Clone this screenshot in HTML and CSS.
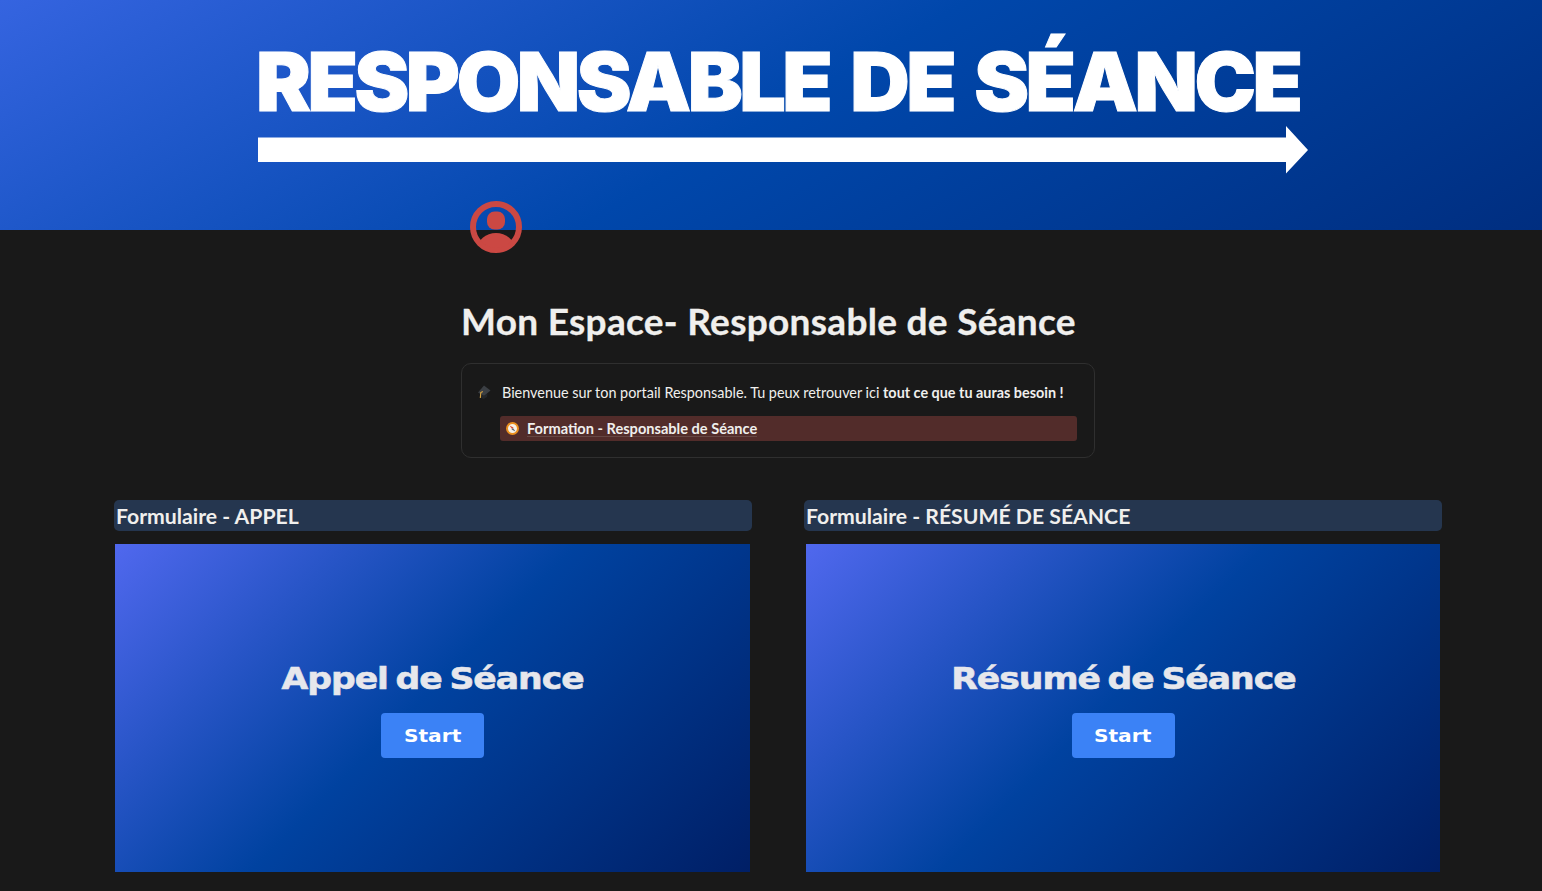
FILE: index.html
```html
<!DOCTYPE html>
<html lang="fr">
<head>
    <meta charset="UTF-8">
    <title>Mon Espace- Responsable de Séance</title>
    <link rel="stylesheet" href="styles.css">
</head>
<body>
    <header class="banner">
        <div class="banner-title">RESPONSABLE DE SÉANCE</div>
        <svg class="banner-arrow" width="1050" height="48" viewBox="0 0 1050 48">
            <path fill="#fff" d="M0 11.500H1028V0L1050 24 1028 47.500V36H0Z"/>
        </svg>
    </header>

    <svg class="avatar" width="52" height="52" viewBox="0 0 52 52">
        <defs>
            <clipPath id="avatar-clip"><circle cx="26" cy="26" r="21"/></clipPath>
        </defs>
        <circle cx="26" cy="26" r="23" fill="none" stroke="#cb4843" stroke-width="6"/>
        <rect x="17" y="10.500" width="18" height="18" rx="7.500" fill="#cb4843"/>
        <ellipse cx="26" cy="48" rx="18.700" ry="16" fill="#cb4843" clip-path="url(#avatar-clip)"/>
    </svg>

    <main class="page">
        <section class="intro">
            <h1 class="page-title">Mon Espace- Responsable de Séance</h1>
            <div class="callout">
                <div class="callout-row">
                    <svg class="cap-icon" width="14" height="15" viewBox="0 0 14 15">
                        <path fill="#3b3f44" d="M7 0.500 13.500 5.500 7 11 1 7.500Z"/>
                        <path fill="#23262a" d="M4 9 7 11 10.500 8.500 10 12 6.500 14 4 12.500Z"/>
                        <path fill="none" stroke="#d9a441" stroke-width="1.100" d="M5.800 6.500 3.800 7.500 3.300 13"/>
                    </svg>
                    <p class="callout-text">Bienvenue sur ton portail Responsable. Tu peux retrouver ici <strong>tout ce que tu auras besoin !</strong></p>
                </div>
                <div class="page-link">
                    <svg class="compass-icon" width="13" height="13" viewBox="0 0 13 13">
                        <circle cx="6.500" cy="6.500" r="5.500" fill="#f5f1e8" stroke="#ea8f1e" stroke-width="2"/>
                        <path fill="#d8482f" d="M3.500 3.500 7.500 5.500 6 7Z"/>
                        <path fill="#5a6470" d="M9.500 9.500 5.500 7.500 7 6Z"/>
                    </svg>
                    <span class="page-link-label">Formation - Responsable de Séance</span>
                </div>
            </div>
        </section>

        <section class="forms">
            <article class="form-block">
                <h2 class="form-heading">Formulaire - APPEL</h2>
                <div class="form-card">
                    <div class="form-card-title">Appel de Séance</div>
                    <a class="start-btn"><span class="start-label">Start</span></a>
                </div>
            </article>
            <article class="form-block">
                <h2 class="form-heading">Formulaire - RÉSUMÉ DE SÉANCE</h2>
                <div class="form-card">
                    <div class="form-card-title">Résumé de Séance</div>
                    <a class="start-btn"><span class="start-label">Start</span></a>
                </div>
            </article>
        </section>
    </main>
</body>
</html>
```

FILE: styles.css
```css
body {
    margin: 0;
    background-color: #191919;
    color: #f0efed;
    font-family: "Lato", "Liberation Sans", sans-serif;
    position: relative;
    overflow-x: hidden;
}

.banner {
    height: 230px;
    box-sizing: border-box;
    padding: 33px 0 0 258px;
    background: linear-gradient(150deg, #3564e0 0%, #0047ab 50%, #002e80 100%);
}

.banner-title {
    color: #fff;
    font-family: "Inter", sans-serif;
    font-size: 81px;
    font-weight: 900;
    line-height: 93px;
    letter-spacing: -3.5px;
    word-spacing: 8px;
    white-space: nowrap;
    -webkit-text-stroke: 1px #fff;
    transform: translate(-2px, 3px) scaleX(1.018);
    transform-origin: left center;
}

.banner-arrow {
    display: block;
}

.avatar {
    position: absolute;
    left: 470px;
    top: 201px;
}

.page {
    padding: 0 100px 19px 114px;
}

.intro {
    width: 634px;
    margin: 0 auto;
    padding-top: 67px;
}

.page-title {
    margin: 0 0 19px;
    font-size: 37px;
    font-weight: 700;
    line-height: 47px;
    letter-spacing: 0.3px;
    white-space: nowrap;
    -webkit-text-stroke: 0.3px #f0efed;
}

.callout {
    box-sizing: border-box;
    height: 95px;
    border: 1px solid #2f2f2f;
    border-radius: 10px;
    padding: 19px 17px 0 15px;
}

.callout-row {
    display: flex;
    align-items: center;
    gap: 11px;
    height: 18px;
}

.callout-text {
    margin: 0;
    font-size: 14.4px;
    white-space: nowrap;
}

.callout-text strong {
    font-weight: 700;
}

.page-link {
    display: flex;
    align-items: center;
    gap: 8px;
    height: 25px;
    margin: 15px 0 0 23px;
    padding-left: 6px;
    background-color: #522c2a;
    border-radius: 3px;
    font-size: 14.6px;
    font-weight: 700;
}

.page-link-label {
    border-bottom: 1px solid #664744;
    line-height: 15px;
}

.forms {
    display: grid;
    grid-template-columns: 638px 638px;
    column-gap: 52px;
    margin-top: 42px;
}

.form-heading {
    height: 31px;
    margin: 0 0 13px;
    padding-left: 2px;
    box-sizing: border-box;
    background-color: #25364f;
    border-radius: 5px;
    font-size: 21.2px;
    font-weight: 700;
    line-height: 33px;
}

.form-card {
    width: 635px;
    height: 328px;
    margin-left: 1px;
    display: flex;
    flex-direction: column;
    align-items: center;
    justify-content: center;
    gap: 15px;
    background: linear-gradient(135deg, #5068ee 0%, #0042a0 48%, #001f66 100%);
}

.form-block + .form-block .form-card {
    width: 634px;
    margin-left: 2px;
}

.form-card-title {
    color: #e6e7ec;
    font-family: "DejaVu Sans", sans-serif;
    font-size: 31px;
    font-weight: 700;
    line-height: 40px;
    letter-spacing: -0.9px;
    word-spacing: -3px;
    -webkit-text-stroke: 0.6px #e6e7ec;
    transform: scaleX(1.115);
}

.start-btn {
    display: flex;
    align-items: center;
    justify-content: center;
    width: 103px;
    height: 45px;
    background-color: #3b82f6;
    border-radius: 4px;
    color: #fff;
    font-family: "DejaVu Sans", sans-serif;
    font-size: 18px;
    font-weight: 700;
}

.start-label {
    transform: scaleX(1.12);
}
```
